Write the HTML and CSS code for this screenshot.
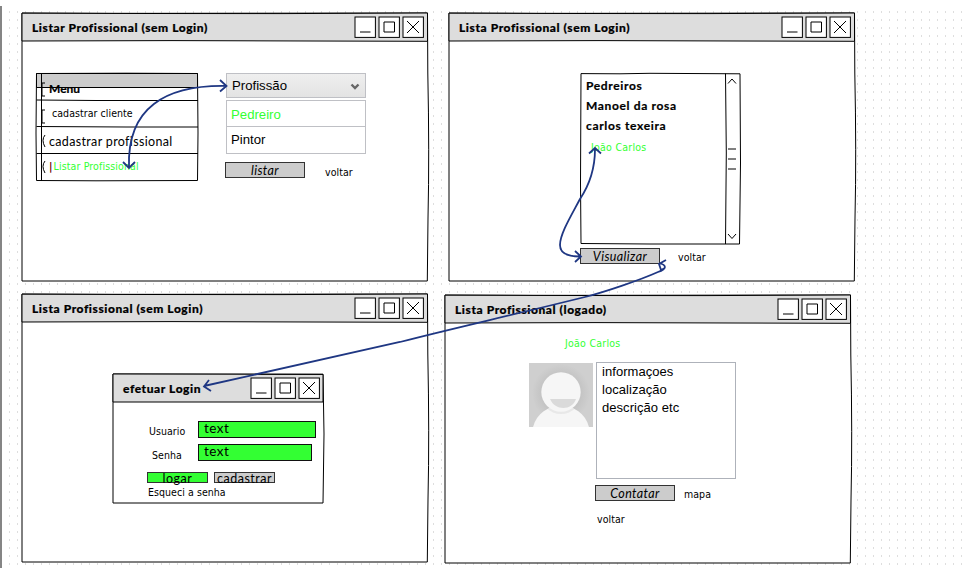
FILE: index.html
```html
<!DOCTYPE html>
<html lang="pt">
<head>
<meta charset="utf-8">
<title>Listar Profissional</title>
<link rel="stylesheet" href="styles.css">
</head>
<body>
<svg class="defs" width="0" height="0">
  <defs>
    <symbol id="frame" viewBox="-2 -2 412 273" overflow="visible">
      <path d="M0 0 L90 .4 L405.500 0 L405.800 60 Q407.500 140 406 205 L405.300 268 H0 Z" fill="#fff" stroke="#000"/>
      <path d="M0 .2 L130 .5 L260 .6 L405.500 0 V28.3 L290 28 L150 27.6 L0 28 Z" fill="#ddd" stroke="#000"/>
    </symbol>
    <symbol id="controls" viewBox="0 0 70 22">
      <g fill="#fff" stroke="#000">
        <rect x="1" y="1" width="20.4" height="20.4"/>
        <rect x="25" y="1" width="20.4" height="20.4"/>
        <rect x="49" y="1" width="20.4" height="20.4"/>
        <path d="M6 16H16.500M30 6H40.500V16H30ZM53 5L65 17M65 5L53 17"/>
      </g>
    </symbol>
  </defs>
</svg>
<main class="canvas">

  <section class="window w1">
    <svg class="frame" width="412" height="273"><use href="#frame"/></svg>
    <header class="titlebar"><h2 class="title">Listar Profissional (sem Login)</h2><svg width="70" height="22"><use href="#controls"/></svg></header>
    <div class="body list-body">
      <nav class="menu">
        <svg class="menu-lines" width="164" height="112" viewBox="-1 -1 164 112" fill="none" stroke="#000">
          <path d="M0.500 0.500H161.500V14.500H0.500Z" fill="#ccc"/>
          <path d="M.5 .500 L90 .2 L161.500 .5 L162 60 L161.500 107.500 L60 107.800 L.5 107.500 L0 60 ZM.5 27L60 27.500L162 27.500M.5 53.500L90 54L162 54M.5 80.500H162M5.500 0V108"/>
          <path d="M9 10H6V23H9M9 37H6V50H9M9 62Q5 67 9 74M9 88Q5 93 9 100"/>
        </svg>
        <span class="hand bold row-menu">Menu</span>
        <span class="small row-client">cadastrar cliente</span>
        <span class="hand row-prof">cadastrar profissional</span>
        <span class="small green row-list"><span class="cursor">|</span>Listar Profissional</span>
      </nav>
      <div class="form">
        <div class="select"><span>Profissão</span><svg width="10" height="8" viewBox="0 0 10 8"><path d="M1.500 2.500L5 6L8.500 2.500" fill="none" stroke="#666" stroke-width="2.400"/></svg></div>
        <ul class="options"><li class="green">Pedreiro</li><li>Pintor</li></ul>
        <div class="actions"><span class="button">listar</span><span class="small link">voltar</span></div>
      </div>
    </div>
  </section>

  <section class="window w2">
    <svg class="frame" width="412" height="273"><use href="#frame"/></svg>
    <header class="titlebar"><h2 class="title">Lista Profissional (sem Login)</h2><svg width="70" height="22"><use href="#controls"/></svg></header>
    <div class="body people-body">
      <div class="listbox">
        <svg class="listbox-lines" width="164" height="174" viewBox="-1 -1 164 174" fill="none" stroke="#000">
          <path d="M1 .6L40 .8L70 .3L160 .8L160.500 90L159.500 171L70 171L1 170.500L.5 110Z" fill="#fff"/>
          <path d="M145.500 .5L146.300 80L145.500 171M148 10.500L152 6L156 10.500M148 161L152 165.500L156 161M148 76H156M148 86H156M148 96H156"/>
        </svg>
        <span class="hand bold">Pedreiros</span>
        <span class="hand bold">Manoel da rosa</span>
        <span class="hand bold">carlos texeira</span>
        <span class="small green joao">João Carlos</span>
      </div>
      <div class="actions"><span class="button">Visualizar</span><span class="small link">voltar</span></div>
    </div>
  </section>

  <section class="window w3">
    <svg class="frame" width="412" height="273"><use href="#frame"/></svg>
    <header class="titlebar"><h2 class="title">Lista Profissional (sem Login)</h2><svg width="70" height="22"><use href="#controls"/></svg></header>
    <section class="dialog">
      <svg class="frame" width="216" height="134" viewBox="-2 -2 216 134" stroke="#000"><path d="M0 0L210 .3L211 60L210 129H0Z" fill="#fff"/><path d="M0 0L210 .3V28H0Z" fill="#ddd"/></svg>
      <header class="titlebar"><h2 class="title">efetuar Login</h2><svg width="70" height="22"><use href="#controls"/></svg></header>
      <div class="login">
        <div class="field"><label class="small">Usuario</label><span class="input hand">text</span></div>
        <div class="field second"><label class="small">Senha</label><span class="input hand short">text</span></div>
        <div class="login-actions"><span class="mini go hand">logar</span><span class="mini hand">cadastrar</span></div>
        <span class="small forgot">Esqueci a senha</span>
      </div>
    </section>
  </section>

  <section class="window w4">
    <svg class="frame" width="412" height="273"><use href="#frame"/></svg>
    <header class="titlebar"><h2 class="title">Lista Profissional (logado)</h2><svg width="70" height="22"><use href="#controls"/></svg></header>
    <div class="body profile-body">
      <span class="small green profile-name">João Carlos</span>
      <div class="profile">
        <svg class="avatar" width="64" height="64" viewBox="0 0 64 64">
          <defs>
            <radialGradient id="shade"><stop offset=".62" stop-color="#c2c2c2"/><stop offset="1" stop-color="#cfcfcf"/></radialGradient>
            <clipPath id="shoulders"><path d="M4 64C8 50 19 43 32 43S56 50 60 64Z"/></clipPath>
          </defs>
          <rect width="64" height="64" fill="#cfcfcf"/>
          <circle cx="32" cy="30" r="29" fill="url(#shade)"/>
          <path d="M4 64C8 50 19 43 32 43S56 50 60 64Z" fill="#f6f6f6"/>
          <circle cx="32" cy="30" r="21" fill="#e8e8e8" clip-path="url(#shoulders)"/>
          <circle cx="32" cy="29" r="19.700" fill="#f6f6f6"/>
          <path d="M21 36H47C43 48 26 48 21 36Z" fill="#dadada"/>
        </svg>
        <div class="details">
          <div class="textarea">informaçoes<br>localização<br>descrição etc</div>
          <div class="actions"><span class="button">Contatar</span><span class="small link map">mapa</span></div>
          <span class="small back">voltar</span>
        </div>
      </div>
    </div>
  </section>

  <svg class="arrows" width="966" height="568" fill="none" stroke="#1f3783" stroke-width="1.800">
    <path d="M226 86C165 85 127 108 129 167M220 80L226.500 86L220 91.500M123 162L129 168L135 162"/>
    <path d="M595 149C595 166 590 184 580 199C571 216 560 234 560 245C560 253 567 256.500 580 256.500M589 153.500L595 148L601 153.500M575 251L581 256.500L575 262"/>
    <path d="M659 263C667 265 667 269 658 272C640 280 605 292 585 297C500 318 450 329 400 342L204 386M666 260L659 264L661 270L665 268M209 380L204 386.500L211 391"/>
  </svg>
</main>
</body>
</html>
```
FILE: styles.css
```css
* { box-sizing: border-box; }
body { margin: 0; background: #fff; color: #000; font-family: "Liberation Sans", Arial, sans-serif; overflow: hidden; }
.defs { position: absolute; }
.canvas { position: relative; width: 966px; height: 562px; margin-top: 6px; border-left: 2px solid #858585; }
.canvas::before {
  content: ""; position: absolute; inset: 5px 0 0 7px;
  background-image: linear-gradient(90deg, #dedede 1px, transparent 1px);
  background-size: 8px 8px;
  -webkit-mask: linear-gradient(#000 2px, transparent 2px) 0 0 / 8px 8px;
  mask: linear-gradient(#000 2px, transparent 2px) 0 0 / 8px 8px;
}
.window { position: absolute; width: 406px; height: 268px; }
.w1 { left: 20px; top: 7px; }
.w2 { left: 447px; top: 7px; }
.w3 { left: 20px; top: 288px; }
.w4 { left: 443px; top: 289px; }
.frame { position: absolute; left: -2px; top: -2px; z-index: -1; overflow: visible; }
.window, .dialog, .menu, .listbox { isolation: isolate; }
.titlebar { display: flex; justify-content: space-between; align-items: flex-start; height: 28px; padding: 3px 4px 0 10px; }
.titlebar svg { flex: none; }
.dialog .titlebar { padding-right: 3px; }
.title { margin: 3px 0 0; font: 900 12px/18px Lato, sans-serif; white-space: nowrap; letter-spacing: .57px; -webkit-text-stroke: .2px #000; }
.hand { font-family: Lato, sans-serif; font-size: 12.500px; line-height: 16px; white-space: nowrap; letter-spacing: .34px; }
.bold { font-weight: bold; font-size: 12px; -webkit-text-stroke: .2px #000; }
.small { font-family: "DejaVu Sans Condensed", "DejaVu Sans", sans-serif; font-stretch: condensed; font-size: 10.500px; line-height: 14px; white-space: nowrap; letter-spacing: .06px; }
.green { color: #3f3; letter-spacing: .25px; }

.list-body { display: flex; gap: 28px; padding: 32px 0 0 14px; }
.menu { position: relative; display: grid; grid-template-rows: repeat(4, 27px); align-items: center; width: 162px; height: 108px; }
.menu-lines, .listbox-lines { position: absolute; left: -1px; top: -1px; z-index: -1; }
.row-menu { padding: 4px 0 0 13px; letter-spacing: 0; }
.row-client { padding: 0 0 2px 16px; }
.row-prof { padding: 3px 0 0 13px; }
.row-list { padding: 0 0 3px 13px; letter-spacing: .13px; }
.cursor { color: #600; font-weight: bold; margin-right: 1px; }
.form { width: 140px; font-size: 13.200px; }
.form .green { letter-spacing: 0; }
.select { display: flex; justify-content: space-between; align-items: center; height: 25px; padding: 0 5px 0 5px; border: 1px solid #bfc0c5; background: linear-gradient(#efefef, #e3e3e3); }
.options { margin: 2px 0 0; padding: 0; list-style: none; border: 1px solid #bfc0c5; height: 54px; background: #fff; }
.options li { height: 25px; line-height: 27px; padding-left: 4px; }
.options li + li { border-top: 1px solid #bfc0c5; line-height: 25px; }
.actions { display: flex; align-items: flex-start; gap: 20px; margin: 8px 0 0 -1px; }
.button { width: 80px; height: 16px; border: 1px solid #333; background: #ccc; text-align: center; font: italic 12.500px/16px Lato, sans-serif; letter-spacing: .4px; }
.link { padding-top: 3px; }

.people-body { padding: 32px 0 0 131px; }
.listbox { position: relative; display: flex; flex-direction: column; width: 161px; height: 171px; padding: 3px 0 0 6px; }
.listbox .hand { height: 20px; line-height: 20px; letter-spacing: .65px; }
.joao { padding: 4px 0 0 5px; }
.people-body .actions { margin: 4px 0 0; gap: 18px; }
.people-body .link { padding-top: 2px; }

.dialog { position: relative; width: 210px; height: 129px; margin: 52px 0 0 91px; }
.login { padding: 18px 0 0 34px; }
.field { display: flex; align-items: center; height: 18px; }
.field label { width: 51px; padding: 4px 0 0 2px; }
.input { width: 118px; height: 17px; border: 1px solid #111; background: #3f3; padding-left: 5px; font-size: 13.500px; line-height: 13px; letter-spacing: .5px; }
.second { height: 17px; margin-top: 6px; }
.second label { padding-left: 5px; }
.short { width: 114px; }
.login-actions { display: flex; gap: 6px; margin-top: 11px; }
.mini { width: 61px; height: 11px; border: 1px solid #333; background: #ccc; text-align: center; line-height: 11px; letter-spacing: .5px; }
.go { background: #3f3; }
.forgot { display: block; margin-top: 2px; padding-left: 1px; }

.profile-body { padding: 13px 0 0 84px; }
.profile-name { display: block; padding-left: 36px; }
.profile { display: flex; gap: 3px; margin-top: 12px; }
.avatar { margin-top: 1px; }
.textarea { width: 140px; height: 117px; border: 1px solid #aeb2ba; padding: 0 0 0 5px; font-size: 13px; line-height: 18px; letter-spacing: .05px; background: #fff; }
.details .actions { margin-top: 6px; gap: 9px; }
.details .link { padding-top: 2px; }
.back { display: block; margin-top: 11px; padding-left: 1px; }
.arrows { position: absolute; left: -2px; top: -6px; }
```
